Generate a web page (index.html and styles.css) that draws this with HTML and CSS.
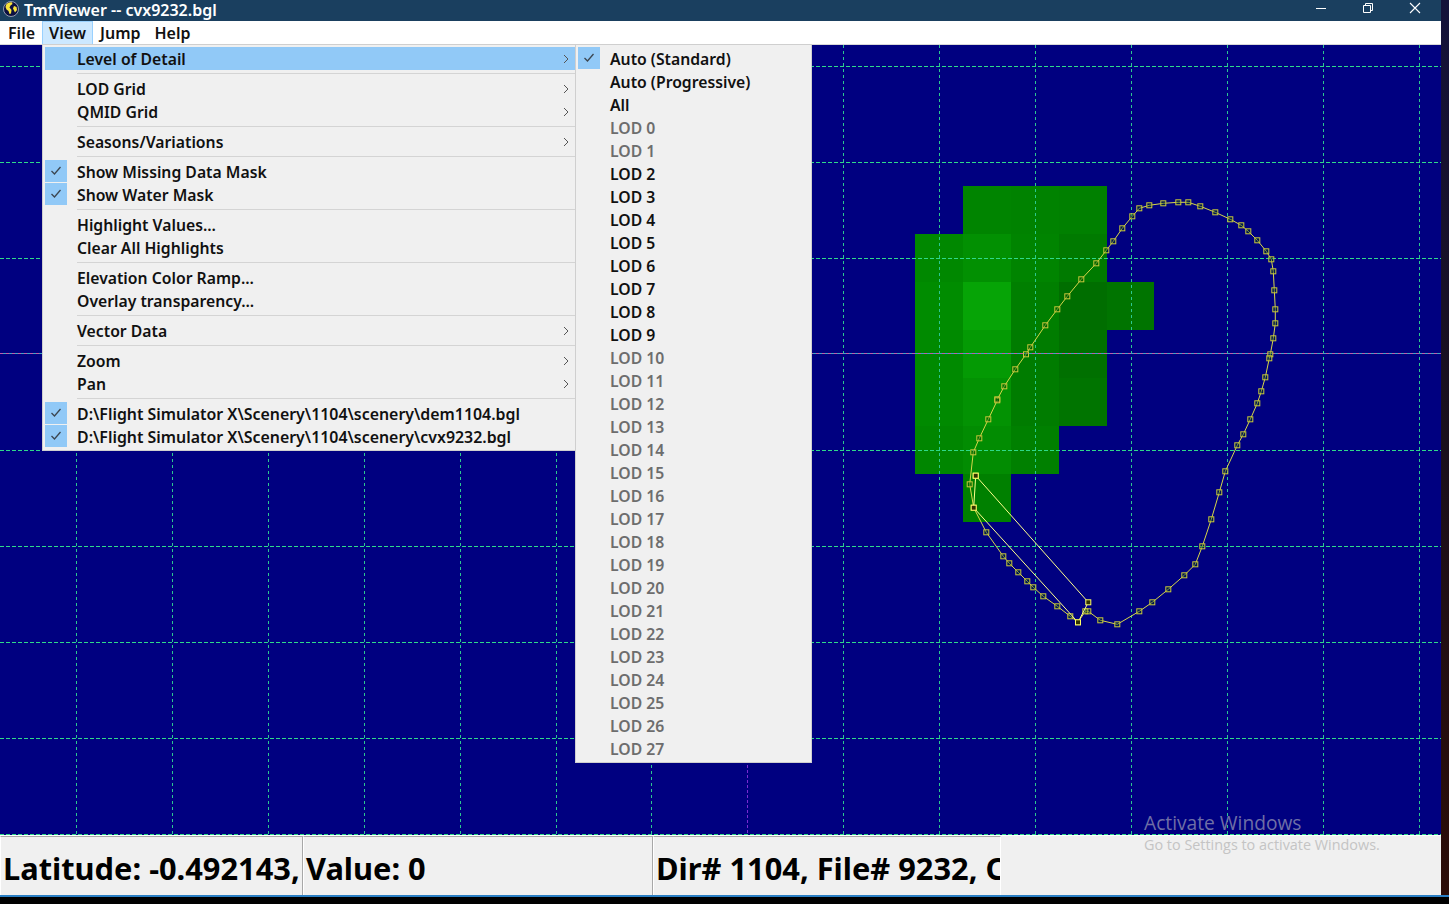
FILE: index.html
```html
<!DOCTYPE html>
<html>
<head>
  <title>TmfViewer -- cvx9232.bgl</title>
  <link rel="stylesheet" href="styles.css">
</head>
<body>
  <svg class="defs" width="0" height="0">
    <symbol id="check" viewBox="0 0 22 22"><path d="M6.500 11l3 3 6-7" fill="none" stroke="#3c4650" stroke-width="1.300"/></symbol>
    <symbol id="chev" viewBox="0 0 6 10"><path d="M1 1l4 4-4 4" fill="none" stroke="#555" stroke-width="1"/></symbol>
  </svg>

  <div class="window">
    <div class="titlebar">
      <svg class="app-icon" width="16" height="16" viewBox="0 0 16 16">
        <circle cx="8" cy="8" r="7.500" fill="#0c1040" stroke="#e8e8f0" stroke-width=".6"/>
        <path d="M3 4c1-2 4-3 6-2.500l.5 1.500-2 1.500-1 2 2 2.500-.5 3.500-1.500.5-1-3-2-1.500-1-2.500z" fill="#f6e33c"/>
        <path d="M11 5l2.500 1 .5 3-2 2.500-1-2-1-2z" fill="#f6e33c"/>
      </svg>
      <span class="title">TmfViewer -- cvx9232.bgl</span>
      <div class="controls">
        <svg width="12" height="12" viewBox="0 0 12 12"><path d="M1 6.500h10" stroke="#fff"/></svg>
        <svg width="12" height="12" viewBox="0 0 12 12"><path d="M3.500 3.500V1.500h7v7h-2M1.500 3.500h7v7h-7z" fill="none" stroke="#fff"/></svg>
        <svg width="12" height="12" viewBox="0 0 12 12"><path d="M1 1l10 10M11 1L1 11" stroke="#fff" stroke-width="1.100"/></svg>
      </div>
    </div>

    <div class="menubar">
      <span class="top-item">File</span>
      <span class="top-item active">View</span>
      <span class="top-item">Jump</span>
      <span class="top-item">Help</span>
    </div>

    <div class="canvas">
      <svg class="map" width="1441" height="790" viewBox="0 45 1441 790">
        <defs>
          <marker id="node" markerUnits="userSpaceOnUse" markerWidth="7" markerHeight="7" refX="3.500" refY="3.500">
            <rect x="1" y="1" width="5" height="5" fill="#004000" fill-opacity=".35" stroke="#c8c83c"/>
          </marker>
          <marker id="node-hi" markerUnits="userSpaceOnUse" markerWidth="7" markerHeight="7" refX="3.500" refY="3.500">
            <rect x="1" y="1" width="5" height="5" fill="#303000" stroke="#ffff66"/>
          </marker>
        </defs>

        <g shape-rendering="crispEdges">
          <rect x="915" y="234" width="48" height="48" fill="#008800"/>
          <rect x="915" y="282" width="48" height="48" fill="#008c00"/>
          <rect x="915" y="330" width="48" height="48" fill="#008a00"/>
          <rect x="915" y="378" width="48" height="48" fill="#008a00"/>
          <rect x="915" y="426" width="48" height="48" fill="#008600"/>
          <rect x="963" y="186" width="48" height="48" fill="#008400"/>
          <rect x="963" y="234" width="48" height="48" fill="#029002"/>
          <rect x="963" y="282" width="48" height="48" fill="#06a406"/>
          <rect x="963" y="330" width="48" height="48" fill="#049a04"/>
          <rect x="963" y="378" width="48" height="48" fill="#039203"/>
          <rect x="963" y="426" width="48" height="48" fill="#028c02"/>
          <rect x="963" y="474" width="48" height="48" fill="#008000"/>
          <rect x="1011" y="186" width="48" height="48" fill="#008200"/>
          <rect x="1011" y="234" width="48" height="48" fill="#008400"/>
          <rect x="1011" y="282" width="48" height="48" fill="#007f00"/>
          <rect x="1011" y="330" width="48" height="48" fill="#007c00"/>
          <rect x="1011" y="378" width="48" height="48" fill="#007c00"/>
          <rect x="1011" y="426" width="48" height="48" fill="#008000"/>
          <rect x="1059" y="186" width="48" height="48" fill="#008000"/>
          <rect x="1059" y="234" width="48" height="48" fill="#007a00"/>
          <rect x="1059" y="282" width="48" height="48" fill="#006e00"/>
          <rect x="1059" y="330" width="48" height="48" fill="#007000"/>
          <rect x="1059" y="378" width="48" height="48" fill="#007400"/>
          <rect x="1107" y="282" width="47" height="48" fill="#007400"/>
        </g>

        <path class="grid grid-v" d="M76.500 45V834M172.500 45V834M268.500 45V834M364.500 45V834M460.500 45V834M556.500 45V834M651.500 45V834M843.500 45V834M939.500 45V834M1035.500 45V834M1131.500 45V834M1227.500 45V834M1323.500 45V834M1419.500 45V834"/>
        <path class="grid grid-h" d="M0 66.500H1441M0 162.500H1441M0 258.500H1441M0 450.500H1441M0 546.500H1441M0 642.500H1441M0 738.500H1441M0 834.500H1441"/>
        <path class="axis" d="M0 353.500H1441"/>
        <path class="axis-alt" d="M0 353.500H1441"/>
        <path class="axis-v" d="M747.500 45V834"/>

        <polyline class="outline" points="997.300,399.300 1004.300,386.300 1015.300,369.300 1026,354.300 1030.300,347.300 1045.300,325.300 1057.300,309.300 1067.300,296.300 1081.300,279.300 1096.300,263.300 1106.300,250.300 1113.300,241.300 1122.300,228.300 1132.300,216.300 1139.300,208.300 1149.300,205.300 1163.300,203.300 1178.300,202.300 1188.300,202.300 1200.300,206.300 1215.300,212.300 1230.300,219.300 1241.300,225.300 1248.300,231.300 1257.300,240.300 1266.300,251.300 1271.300,259.300 1273.300,271.300 1274.300,290.300 1275.300,309.300 1275.300,323.300 1273.300,338.300 1270.300,354.300 1269.300,358.300 1265.300,377.300 1261.300,391.300 1257.300,403.300 1250.300,419.300 1243.300,434.300 1237.300,445.300 1225.300,471.300 1219.300,492.300 1211.300,519.300 1202.300,546.300 1195.300,564.300 1184.300,575.300 1168.300,589.300 1152.300,602.300 1139.300,611.300 1117.300,624.300 1100.300,620.300 1088.300,611.300 1085.300,611.300 1078,622.300 1070.300,616.300 1057.300,606.300 1043.300,596.300 1033.300,587.300 1027.300,581.300 1018.300,572.300 1009.300,563.300 1003.300,556.300 986.300,532.300 973.700,507.700 969.700,484.300 973.300,452.300 979.300,438.300 988.300,419.300 997.300,400.300"/>
        <polyline class="inner" points="975.700,475.700 1088.300,602.300 1078,622.300 973.700,507.700 975.700,475.700"/>
      </svg>
    </div>

    <div class="statusbar">
      <div class="pane pane-lat">Latitude: -0.492143,</div>
      <div class="pane pane-val">Value: 0</div>
      <div class="pane pane-file">Dir# 1104, File# 9232, C</div>
    </div>
    <div class="window-edge"></div>
  </div>

  <div class="menu menu-view">
    <div class="row open"><span>Level of Detail</span><svg class="chev"><use href="#chev"/></svg></div>
    <div class="sep"></div>
    <div class="row"><span>LOD Grid</span><svg class="chev"><use href="#chev"/></svg></div>
    <div class="row"><span>QMID Grid</span><svg class="chev"><use href="#chev"/></svg></div>
    <div class="sep"></div>
    <div class="row"><span>Seasons/Variations</span><svg class="chev"><use href="#chev"/></svg></div>
    <div class="sep"></div>
    <div class="row"><svg class="tick"><use href="#check"/></svg><span>Show Missing Data Mask</span></div>
    <div class="row"><svg class="tick"><use href="#check"/></svg><span>Show Water Mask</span></div>
    <div class="sep"></div>
    <div class="row"><span>Highlight Values...</span></div>
    <div class="row"><span>Clear All Highlights</span></div>
    <div class="sep"></div>
    <div class="row"><span>Elevation Color Ramp...</span></div>
    <div class="row"><span>Overlay transparency...</span></div>
    <div class="sep"></div>
    <div class="row"><span>Vector Data</span><svg class="chev"><use href="#chev"/></svg></div>
    <div class="sep"></div>
    <div class="row"><span>Zoom</span><svg class="chev"><use href="#chev"/></svg></div>
    <div class="row"><span>Pan</span><svg class="chev"><use href="#chev"/></svg></div>
    <div class="sep"></div>
    <div class="row"><svg class="tick"><use href="#check"/></svg><span class="path">D:\Flight Simulator X\Scenery\1104\scenery\dem1104.bgl</span></div>
    <div class="row"><svg class="tick"><use href="#check"/></svg><span class="path">D:\Flight Simulator X\Scenery\1104\scenery\cvx9232.bgl</span></div>
  </div>

  <div class="menu menu-lod">
    <div class="row"><svg class="tick"><use href="#check"/></svg><span>Auto (Standard)</span></div>
    <div class="row"><span>Auto (Progressive)</span></div>
    <div class="row"><span>All</span></div>
    <div class="row off"><span>LOD 0</span></div>
    <div class="row off"><span>LOD 1</span></div>
    <div class="row"><span>LOD 2</span></div>
    <div class="row"><span>LOD 3</span></div>
    <div class="row"><span>LOD 4</span></div>
    <div class="row"><span>LOD 5</span></div>
    <div class="row"><span>LOD 6</span></div>
    <div class="row"><span>LOD 7</span></div>
    <div class="row"><span>LOD 8</span></div>
    <div class="row"><span>LOD 9</span></div>
    <div class="row off"><span>LOD 10</span></div>
    <div class="row off"><span>LOD 11</span></div>
    <div class="row off"><span>LOD 12</span></div>
    <div class="row off"><span>LOD 13</span></div>
    <div class="row off"><span>LOD 14</span></div>
    <div class="row off"><span>LOD 15</span></div>
    <div class="row off"><span>LOD 16</span></div>
    <div class="row off"><span>LOD 17</span></div>
    <div class="row off"><span>LOD 18</span></div>
    <div class="row off"><span>LOD 19</span></div>
    <div class="row off"><span>LOD 20</span></div>
    <div class="row off"><span>LOD 21</span></div>
    <div class="row off"><span>LOD 22</span></div>
    <div class="row off"><span>LOD 23</span></div>
    <div class="row off"><span>LOD 24</span></div>
    <div class="row off"><span>LOD 25</span></div>
    <div class="row off"><span>LOD 26</span></div>
    <div class="row off"><span>LOD 27</span></div>
  </div>

  <div class="watermark">
    <div class="wm-head">Activate Windows</div>
    <div class="wm-sub">Go to Settings to activate Windows.</div>
  </div>
</body>
</html>
```

FILE: styles.css
```css
html, body {
  margin: 0;
  height: 100%;
  overflow: hidden;
}
body {
  background: linear-gradient(180deg, #14123a 0%, #1a0f1c 50%, #2c0c06 100%);
  font-family: "Noto Sans", "Open Sans", sans-serif;
  font-weight: 600;
  color: #111;
}
.defs {
  position: absolute;
}
.window {
  width: 1441px;
  height: 904px;
  display: flex;
  flex-direction: column;
}
.titlebar {
  height: 21px;
  background: #1a3f5f;
  color: #fff;
  display: flex;
  align-items: center;
  padding-left: 3px;
  font-size: 16px;
}
.app-icon {
  margin-right: 5px;
  margin-top: -3px;
}
.title {
  flex: 1;
  line-height: 20px;
  margin-top: -2px;
}
.controls {
  display: flex;
  gap: 35px;
  padding-right: 20px;
  margin-top: -5px;
}
.menubar {
  height: 24px;
  background: #fff;
  display: flex;
  align-items: stretch;
  padding-left: 1px;
  font-size: 16px;
  box-sizing: border-box;
  border-bottom: 1px solid #d8d8d8;
}
.top-item {
  padding: 0 6px;
  line-height: 23px;
  border: 1px solid transparent;
  border-bottom: 0;
}
.top-item.active {
  background: #cce8ff;
  border-color: #99d1ff;
}
.canvas {
  height: 790px;
  background: #000080;
}
.map {
  display: block;
}
.grid {
  fill: none;
  stroke-width: 1;
  shape-rendering: crispEdges;
}
.grid-v {
  stroke: #2cc890;
  stroke-dasharray: 3 3;
}
.grid-h {
  stroke: #2fd98a;
  stroke-dasharray: 4 2;
}
.axis {
  fill: none;
  stroke: #3fa6c4;
  shape-rendering: crispEdges;
}
.axis-alt {
  fill: none;
  stroke: #c45aa8;
  stroke-dasharray: 3 3;
  shape-rendering: crispEdges;
}
.axis-v {
  fill: none;
  stroke: #7a2bd0;
  stroke-dasharray: 3 2;
  shape-rendering: crispEdges;
}
.outline {
  fill: none;
  stroke: #d6d64a;
  stroke-width: 1;
  marker-start: url(#node);
  marker-mid: url(#node);
  marker-end: url(#node);
}
.inner {
  fill: none;
  stroke: #ffff8c;
  stroke-width: 1;
  marker-start: url(#node-hi);
  marker-mid: url(#node-hi);
  marker-end: url(#node-hi);
}
.statusbar {
  height: 60px;
  background: #f0f0f0;
  display: flex;
  font-size: 30.8px;
  font-weight: 700;
  color: #000;
  box-sizing: border-box;
  border-top: 1px solid #fff;
}
.pane {
  white-space: nowrap;
  overflow: hidden;
  line-height: 62px;
  padding-left: 2px;
  box-sizing: border-box;
  border-top: 1px solid #a8a8a8;
  border-right: 1px solid #a8a8a8;
  border-left: 1px solid #fff;
}
.pane-lat {
  width: 303px;
}
.pane-val {
  width: 350px;
}
.pane-file {
  width: 348px;
  border-right: 1px solid #fff;
}
.window-edge {
  width: 1449px;
  height: 2px;
  flex: none;
  background: #2a7fc4;
}
.window::after {
  content: "";
  display: block;
  width: 1449px;
  flex: 1;
  background: #000;
}
.menu {
  position: absolute;
  background: #f0f0f0;
  font-size: 15.75px;
  box-sizing: border-box;
  border: 1px solid #cfcfcf;
  padding: 2px 0 2px 2px;
}
.menu-view {
  left: 42px;
  top: 44px;
  width: 534px;
  height: 407px;
}
.menu-lod {
  left: 575px;
  top: 44px;
  width: 237px;
  height: 719px;
}
.row {
  height: 23px;
  line-height: 24px;
  padding-left: 32px;
  position: relative;
  white-space: nowrap;
}
.row.open {
  background: #91c9f7;
}
.row.off {
  color: #6d6d6d;
}
.path {
  font-size: 15.9px;
}
.sep {
  height: 1px;
  margin: 3px 0 3px 32px;
  background: #d4d4d4;
}
.tick {
  position: absolute;
  left: 0;
  top: 0;
  width: 22px;
  height: 22px;
  background: #91c9f7;
}
.chev {
  position: absolute;
  right: 6px;
  top: 7px;
  width: 6px;
  height: 10px;
}
.watermark {
  position: absolute;
  left: 1144px;
  top: 809px;
  font-family: "Open Sans", "Noto Sans", sans-serif;
  font-weight: 400;
  pointer-events: none;
}
.wm-head {
  font-size: 19.2px;
  line-height: 27px;
  color: #6f6fa6;
}
.wm-sub {
  font-size: 14.4px;
  line-height: 17px;
  color: #c4c4c4;
}
```
